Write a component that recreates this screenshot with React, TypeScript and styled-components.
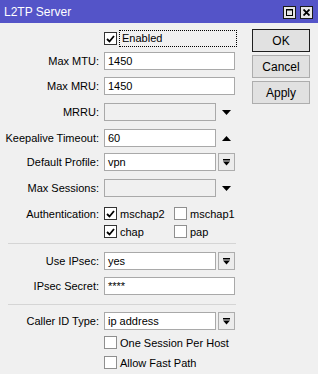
import styled, { createGlobalStyle } from "styled-components"

const Global = createGlobalStyle`
  html, body { margin: 0; padding: 0; background: #f0f0f0; }
  body { font-family: "Liberation Sans", Arial, sans-serif; font-size: 11px; color: #000; }
`

// Window chrome
const Window = styled.div`
  width: 318px;
  height: 374px;
  overflow: hidden;
  background: #f0f0f0;
`
const TitleBar = styled.div`
  height: 23px;
  background: #5454c8;
  display: flex;
  align-items: center;
  justify-content: space-between;
  padding: 0 5px 0 4px;
`
const Title = styled.span`
  color: #fff;
  font-size: 12px;
`
const TitleButtons = styled.div`
  display: flex;
  gap: 4px;
  margin-top: 2px;
`
const TitleButton = styled.div`
  width: 11px;
  height: 11px;
  border: 1px solid #1a1a1a;
  background: #e6e6e6;
  display: flex;
  align-items: center;
  justify-content: center;
`

// Layout
const Body = styled.div`
  display: flex;
  padding-top: 6px;
`
const Form = styled.div`
  width: 240px;
  display: flex;
  flex-direction: column;
`
const Row = styled.div<{ $mt: number; $h?: number }>`
  display: grid;
  grid-template-columns: 99px 131px;
  column-gap: 5px;
  align-items: center;
  height: ${(p) => p.$h ?? 18}px;
  margin-top: ${(p) => p.$mt}px;
`
const Label = styled.label`
  text-align: right;
  white-space: nowrap;
`
const Control = styled.div`
  display: flex;
  align-items: center;
  height: 100%;
`
const Input = styled.div<{ $disabled?: boolean; $short?: boolean }>`
  box-sizing: border-box;
  height: 18px;
  width: ${(p) => (p.$short ? "113px" : "131px")};
  border: 1px solid #a9a9a9;
  background: ${(p) => (p.$disabled ? "#f0f0f0" : "#fff")};
  padding: 0 3px;
  line-height: 16px;
  white-space: nowrap;
`
const DropButton = styled.div`
  box-sizing: border-box;
  width: 17px;
  height: 18px;
  margin-left: 2px;
  border: 1px solid #adadad;
  background: #ececec;
  display: flex;
  align-items: center;
  justify-content: center;
`
const Arrow = styled.div`
  width: 17px;
  margin-left: 2px;
  display: flex;
  align-items: center;
  justify-content: center;
`
const Box = styled.div<{ $checked?: boolean }>`
  box-sizing: border-box;
  width: 13px;
  height: 13px;
  flex: none;
  border: 1px solid ${(p) => (p.$checked ? "#333" : "#8f8f8f")};
  background: #fff;
  display: flex;
  align-items: center;
  justify-content: center;
`
const CheckText = styled.span<{ $focus?: boolean }>`
  margin-left: ${(p) => (p.$focus ? "2px" : "3px")};
  white-space: nowrap;
  ${(p) =>
    p.$focus &&
    `
    flex: 1;
    height: 15px;
    line-height: 15px;
    padding-left: 2px;
    border: 1px dotted #000;
    margin-right: -2px;
  `}
`
const CheckGrid = styled.div`
  display: grid;
  grid-template-columns: 70px 1fr;
  height: 100%;
  align-items: center;
`
const Check = styled.div`
  display: flex;
  align-items: center;
`
const Divider = styled.div<{ $mt: number }>`
  margin: ${(p) => p.$mt}px 0 0 8px;
  width: 228px;
  height: 1px;
  background: #d5d5d5;
`

// Action buttons
const Actions = styled.div`
  margin-left: 12px;
  display: flex;
  flex-direction: column;
  gap: 3px;
`
const Button = styled.div<{ $default?: boolean }>`
  box-sizing: border-box;
  width: 58px;
  height: 23px;
  border: 1px solid ${(p) => (p.$default ? "#1e1e1e" : "#adadad")};
  background: #e1e1e1;
  display: flex;
  align-items: center;
  justify-content: center;
  font-size: 12px;
`

const CheckMark = () => (
  <svg width="9" height="8" viewBox="0 0 9 8">
    <path d="M1 4 L3.5 6.5 L8 1" fill="none" stroke="#000" strokeWidth="1.8" />
  </svg>
)

const Checkbox = ({ checked, label, focus }: { checked?: boolean; label: string; focus?: boolean }) => (
  <Check style={focus ? { flex: 1 } : undefined}>
    <Box $checked={checked}>{checked && <CheckMark />}</Box>
    <CheckText $focus={focus}>{label}</CheckText>
  </Check>
)

const DropIcon = () => (
  <svg width="7" height="7" viewBox="0 0 7 7">
    <rect x="0" y="0" width="7" height="1.5" fill="#000" />
    <path d="M0 2.5 H7 L3.5 6.5 Z" fill="#000" />
  </svg>
)

const Tri = ({ up }: { up?: boolean }) => (
  <svg width="9" height="5" viewBox="0 0 9 5">
    <path d={up ? "M0 5 H9 L4.5 0 Z" : "M0 0 H9 L4.5 5 Z"} fill="#000" />
  </svg>
)

const Field = ({ label, value, mt, kind, disabled }: {
  label: string; value?: string; mt: number; kind?: "drop" | "down" | "up"; disabled?: boolean
}) => (
  <Row $mt={mt}>
    <Label>{label}</Label>
    <Control>
      <Input $short={!!kind} $disabled={disabled}>{value}</Input>
      {kind === "drop" && <DropButton><DropIcon /></DropButton>}
      {kind === "down" && <Arrow><Tri /></Arrow>}
      {kind === "up" && <Arrow><Tri up /></Arrow>}
    </Control>
  </Row>
)

const App = () => (
  <Window>
    <Global />
    <TitleBar>
      <Title>L2TP Server</Title>
      <TitleButtons>
        <TitleButton>
          <svg width="7" height="7" viewBox="0 0 7 7">
            <rect x="0.5" y="0.5" width="6" height="6" fill="none" stroke="#000" />
            <rect x="0" y="0" width="7" height="1.5" fill="#000" />
          </svg>
        </TitleButton>
        <TitleButton>
          <svg width="7" height="7" viewBox="0 0 7 7">
            <path d="M0.5 0.5 L6.5 6.5 M6.5 0.5 L0.5 6.5" stroke="#000" strokeWidth="1.8" />
          </svg>
        </TitleButton>
      </TitleButtons>
    </TitleBar>
    <Body>
      <Form>
        <Row $mt={1} $h={16}>
          <span />
          <Control>
            <Checkbox checked focus label="Enabled" />
          </Control>
        </Row>
        <Field label="Max MTU:" value="1450" mt={6} />
        <Field label="Max MRU:" value="1450" mt={7} />
        <Field label="MRRU:" mt={8} kind="down" disabled />
        <Field label="Keepalive Timeout:" value="60" mt={8} kind="up" />
        <Field label="Default Profile:" value="vpn" mt={6} kind="drop" />
        <Field label="Max Sessions:" mt={8} kind="down" disabled />
        <Row $mt={9} $h={15}>
          <Label>Authentication:</Label>
          <CheckGrid>
            <Checkbox checked label="mschap2" />
            <Checkbox label="mschap1" />
          </CheckGrid>
        </Row>
        <Row $mt={3} $h={15}>
          <span />
          <CheckGrid>
            <Checkbox checked label="chap" />
            <Checkbox label="pap" />
          </CheckGrid>
        </Row>
        <Divider $mt={4} />
        <Field label="Use IPsec:" value="yes" mt={8} kind="drop" />
        <Field label="IPsec Secret:" value="****" mt={7} />
        <Divider $mt={9} />
        <Field label="Caller ID Type:" value="ip address" mt={7} kind="drop" />
        <Row $mt={5} $h={15}>
          <span />
          <Control>
            <Checkbox label="One Session Per Host" />
          </Control>
        </Row>
        <Row $mt={5} $h={15}>
          <span />
          <Control>
            <Checkbox label="Allow Fast Path" />
          </Control>
        </Row>
      </Form>
      <Actions>
        <Button $default>OK</Button>
        <Button>Cancel</Button>
        <Button>Apply</Button>
      </Actions>
    </Body>
  </Window>
)

export default App
